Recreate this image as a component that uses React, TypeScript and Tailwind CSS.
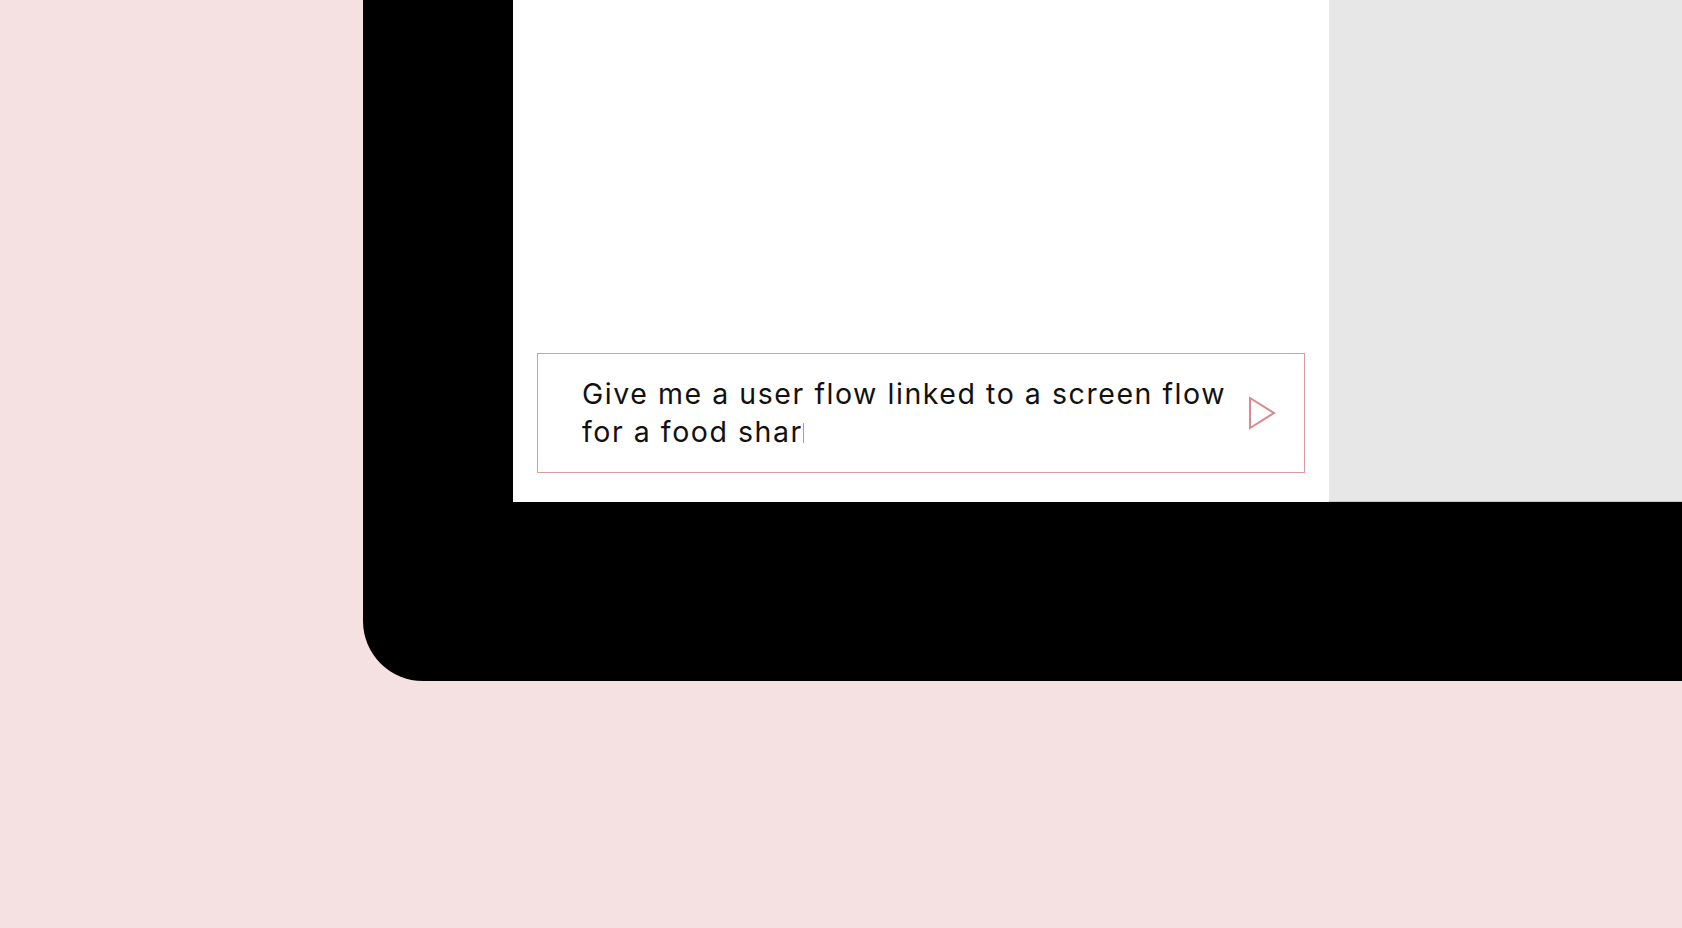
function SendIcon() {
  return (
    <svg width="28" height="34" viewBox="0 0 28 34" fill="none" className="shrink-0">
      <path d="M2 2 L26 17 L2 32 Z" stroke="#d98b8d" strokeWidth="2" strokeLinejoin="miter" />
    </svg>
  );
}

function PromptBox() {
  return (
    <div className="flex h-[120px] w-full items-center border border-[#dc9a9c] bg-white pl-[44px] pr-[28px]">
      <p className="flex-1 font-['Inter',sans-serif] text-[28.5px] leading-[38px] tracking-[1.55px] text-[#111111]">
        Give me a user flow linked to a screen flow
        <br />
        for a food shar
        <span className="inline-block h-[20px] w-[1.5px] translate-y-[1px] bg-[#a0a0a0] align-baseline" />
      </p>
      <SendIcon />
    </div>
  );
}

export default function App() {
  return (
    <div className="h-[928px] w-[1682px] overflow-hidden bg-[#f6e1e2] pl-[363px]">
      <div className="flex h-[681px] w-full rounded-bl-[60px] bg-black pb-[179px] pl-[150px]">
        <div className="flex h-full w-[816px] flex-col justify-end bg-white px-[24px] pb-[29px]">
          <PromptBox />
        </div>
        <div className="h-full flex-1 border-b border-[#c8c8c8] bg-[#e7e7e7]" />
      </div>
    </div>
  );
}
